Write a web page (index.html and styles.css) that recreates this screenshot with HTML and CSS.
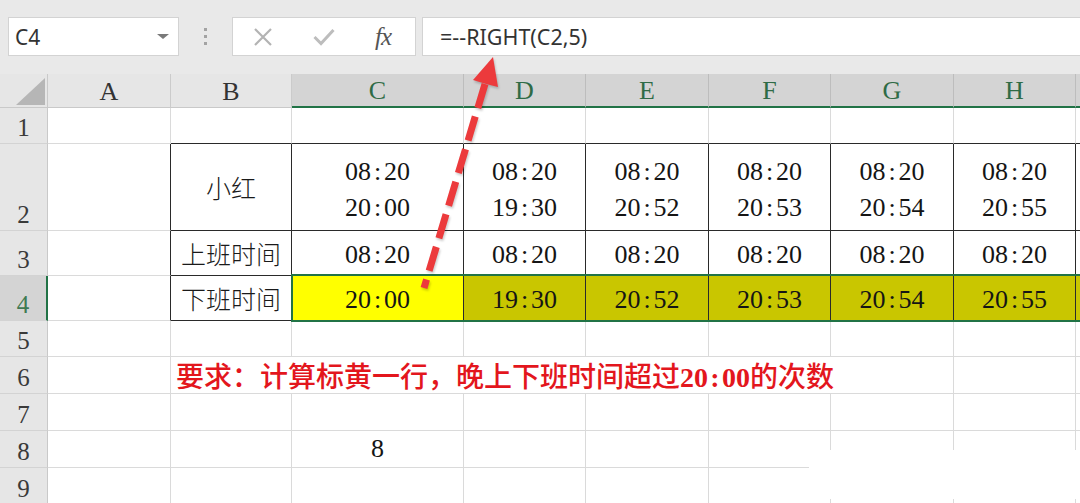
FILE: index.html
```html
<!DOCTYPE html>
<html lang="zh-CN">
<head>
<meta charset="utf-8">
<title>Excel</title>
<link rel="stylesheet" href="styles.css">
</head>
<body>
<div class="app">
  <div class="fbar">
    <div class="namebox"><span class="ref">C4</span><span class="caret"></span></div>
    <div class="grip"><i></i><i></i><i></i></div>
    <div class="fnbox">
      <svg class="ico-x" viewBox="0 0 20 20" width="20" height="20"><path d="M2 2 L18 18 M18 2 L2 18" stroke="#b3b3b3" stroke-width="2.2" fill="none"/></svg>
      <svg class="ico-ok" viewBox="0 0 22 18" width="22" height="18"><path d="M1.5 9 L8 15.5 L20.5 2" stroke="#bdbdbd" stroke-width="3" fill="none"/></svg>
      <span class="fx">fx</span>
    </div>
    <div class="formula">=--RIGHT(C2,5)</div>
  </div>

  <div class="sheet">
    <!-- header row -->
    <div class="corner"></div>
    <div class="ch">A</div>
    <div class="ch">B</div>
    <div class="ch s">C</div>
    <div class="ch s">D</div>
    <div class="ch s">E</div>
    <div class="ch s">F</div>
    <div class="ch s">G</div>
    <div class="ch s">H</div>
    <div class="ch s"></div>

    <!-- row 1 -->
    <div class="rh">1</div>
    <div class="c"></div>
    <div class="c bb"></div>
    <div class="c bb"></div>
    <div class="c bb"></div>
    <div class="c bb"></div>
    <div class="c bb"></div>
    <div class="c bb"></div>
    <div class="c bb"></div>
    <div class="c bb"></div>

    <!-- row 2 -->
    <div class="rh">2</div>
    <div class="c br"></div>
    <div class="c t cn">小红</div>
    <div class="c t tm two"><span class="v">08<span class="co">:</span>20<br>20<span class="co">:</span>00</span></div>
    <div class="c t tm two"><span class="v">08<span class="co">:</span>20<br>19<span class="co">:</span>30</span></div>
    <div class="c t tm two"><span class="v">08<span class="co">:</span>20<br>20<span class="co">:</span>52</span></div>
    <div class="c t tm two"><span class="v">08<span class="co">:</span>20<br>20<span class="co">:</span>53</span></div>
    <div class="c t tm two"><span class="v">08<span class="co">:</span>20<br>20<span class="co">:</span>54</span></div>
    <div class="c t tm two"><span class="v">08<span class="co">:</span>20<br>20<span class="co">:</span>55</span></div>
    <div class="c t"></div>

    <!-- row 3 -->
    <div class="rh">3</div>
    <div class="c br"></div>
    <div class="c t cn">上班时间</div>
    <div class="c t tm one"><span class="v">08<span class="co">:</span>20</span></div>
    <div class="c t tm one"><span class="v">08<span class="co">:</span>20</span></div>
    <div class="c t tm one"><span class="v">08<span class="co">:</span>20</span></div>
    <div class="c t tm one"><span class="v">08<span class="co">:</span>20</span></div>
    <div class="c t tm one"><span class="v">08<span class="co">:</span>20</span></div>
    <div class="c t tm one"><span class="v">08<span class="co">:</span>20</span></div>
    <div class="c t"></div>

    <!-- row 4 -->
    <div class="rh s">4</div>
    <div class="c br"></div>
    <div class="c t cn">下班时间</div>
    <div class="c t tm one yel"><span class="v">20<span class="co">:</span>00</span></div>
    <div class="c t tm one oli"><span class="v">19<span class="co">:</span>30</span></div>
    <div class="c t tm one oli"><span class="v">20<span class="co">:</span>52</span></div>
    <div class="c t tm one oli"><span class="v">20<span class="co">:</span>53</span></div>
    <div class="c t tm one oli"><span class="v">20<span class="co">:</span>54</span></div>
    <div class="c t tm one oli"><span class="v">20<span class="co">:</span>55</span></div>
    <div class="c t oli"></div>

    <!-- row 5 -->
    <div class="rh">5</div>
    <div class="c"></div><div class="c"></div><div class="c"></div><div class="c"></div>
    <div class="c"></div><div class="c"></div><div class="c"></div><div class="c"></div><div class="c"></div>

    <!-- row 6 -->
    <div class="rh">6</div>
    <div class="c"></div>
    <div class="c note"><span class="v">要求：计算标黄一行，晚上下班时间超过<span class="num">20<span class="co">:</span>00</span>的次数</span></div>
    <div class="c"></div>
    <div class="c"></div>

    <!-- row 7 -->
    <div class="rh">7</div>
    <div class="c"></div><div class="c"></div><div class="c"></div><div class="c"></div>
    <div class="c"></div><div class="c"></div><div class="c"></div><div class="c"></div><div class="c"></div>

    <!-- row 8 -->
    <div class="rh">8</div>
    <div class="c"></div><div class="c"></div>
    <div class="c tm"><span class="v">8</span></div>
    <div class="c"></div><div class="c"></div><div class="c"></div><div class="c"></div><div class="c"></div><div class="c"></div>

    <!-- row 9 -->
    <div class="rh">9</div>
    <div class="c"></div><div class="c"></div><div class="c"></div><div class="c"></div>
    <div class="c"></div><div class="c"></div><div class="c"></div><div class="c"></div><div class="c"></div>
  </div>

  <div class="sel"></div>
  <div class="patch"></div>

  <svg class="arrow" viewBox="0 0 1080 503" width="1080" height="503">
    <line x1="485" y1="84" x2="424" y2="288" stroke="#ec3a3c" stroke-width="7" stroke-dasharray="25 9"/>
    <polygon points="493,57 473,80 486,84 498,87" fill="#ec3a3c"/>
  </svg>
</div>
</body>
</html>
```

FILE: styles.css
```css
* { box-sizing: border-box; margin: 0; padding: 0; }

html, body {
  width: 1080px;
  height: 503px;
  overflow: hidden;
  background: #ffffff;
}

body {
  font-family: "Liberation Serif", "DejaVu Serif", serif;
}

.app {
  position: relative;
  width: 1080px;
  height: 503px;
  overflow: hidden;
  background: #ffffff;
}

/* ---------- formula bar ---------- */
.fbar {
  height: 74px;
  background: #e9e9e9;
  display: flex;
  align-items: flex-start;
  padding: 17px 0 0 8px;
}

.namebox {
  width: 171px;
  height: 39px;
  background: #ffffff;
  border: 1px solid #d3d3d3;
  display: flex;
  align-items: center;
  justify-content: space-between;
  padding: 0 9px 0 6px;
}

.ref {
  font-family: "Noto Sans", sans-serif;
  font-size: 21px;
  color: #333333;
}

.caret {
  width: 0;
  height: 0;
  border-left: 6px solid transparent;
  border-right: 6px solid transparent;
  border-top: 5px solid #7a7a7a;
}

.grip {
  width: 53px;
  height: 39px;
  display: flex;
  flex-direction: column;
  align-items: center;
  justify-content: center;
  gap: 4px;
}

.grip i {
  display: block;
  width: 3px;
  height: 3px;
  background: #a3a3a3;
}

.fnbox {
  width: 184px;
  height: 39px;
  background: #ffffff;
  border: 1px solid #d3d3d3;
  display: flex;
  align-items: center;
  padding-left: 20px;
}

.ico-ok { margin-left: 40px; }

.fx {
  margin-left: 40px;
  font-family: "Liberation Serif", serif;
  font-style: italic;
  font-size: 25px;
  color: #555555;
  letter-spacing: -1px;
}

.formula {
  flex: 1;
  margin-left: 6px;
  height: 39px;
  background: #ffffff;
  border: 1px solid #d3d3d3;
  border-right: 0;
  padding-left: 17px;
  display: flex;
  align-items: center;
  font-family: "Noto Sans", sans-serif;
  font-size: 21.5px;
  color: #333333;
}

/* ---------- sheet grid ---------- */
.sheet {
  display: grid;
  grid-template-columns: 48px 123px 121px 172px 122px 123px 122px 123px 122px 40px;
  grid-template-rows: 34px 36px 87px 45px 45px 36px 37px 37px 37px 37px;
}

.corner {
  background: #e6e6e6;
  border-right: 1px solid #c9c9c9;
  border-bottom: 1px solid #c9c9c9;
  position: relative;
}

.corner::after {
  content: "";
  position: absolute;
  left: 16px;
  top: 4px;
  width: 29px;
  height: 27px;
  background: #b6b6b6;
  clip-path: polygon(100% 0, 100% 100%, 0 100%);
}

.ch {
  background: #e6e6e6;
  border-right: 1px solid #cbcbcb;
  border-bottom: 1px solid #c9c9c9;
  display: flex;
  align-items: center;
  justify-content: center;
  font-size: 26px;
  color: #333333;
  padding-top: 2px;
}

.ch.s {
  background: #d4d4d4;
  color: #2f6b46;
  border-bottom: 2px solid #217346;
  border-right-color: #bdbdbd;
}

.rh {
  background: #e6e6e6;
  border-right: 1px solid #c9c9c9;
  border-bottom: 1px solid #d3d3d3;
  display: flex;
  align-items: flex-end;
  justify-content: center;
  font-size: 25px;
  line-height: 24px;
  color: #3a3a3a;
  padding-bottom: 3px;
}

.rh.s {
  background: #d4d4d4;
  color: #3f7a52;
  border-right: 2px solid #217346;
}

.c {
  border-right: 1px solid #dadada;
  border-bottom: 1px solid #dadada;
  display: flex;
  align-items: center;
  justify-content: center;
  font-size: 26px;
  color: #151515;
}

.v { display: block; }

.bb { border-bottom-color: #2a2a2a; }
.br { border-right-color: #2a2a2a; }
.t { border-right-color: #2a2a2a; border-bottom-color: #2a2a2a; }

.tm {
  font-family: "Liberation Serif", "DejaVu Serif", serif;
  font-size: 26px;
  line-height: 36px;
  text-align: center;
}

.one { padding-top: 3px; }
.two { padding-top: 6px; }

.co {
  display: inline-block;
  width: 0.5em;
  text-align: center;
}

.cn {
  font-family: "Noto Sans CJK SC", sans-serif;
  font-weight: 300;
  font-size: 25px;
  color: #1a1a1a;
}

.yel { background: #ffff00; }
.oli { background: #c9c600; }

.note {
  grid-column: span 6;
  justify-content: flex-start;
  padding-left: 5px;
  white-space: nowrap;
  font-family: "Noto Sans CJK SC", sans-serif;
  font-weight: 500;
  font-size: 28px;
  color: #e3161d;
}

.num {
  font-family: "Liberation Serif", serif;
  font-weight: 700;
}

/* ---------- overlays ---------- */
.sel {
  position: absolute;
  left: 291px;
  top: 274px;
  width: 820px;
  height: 48px;
  border: 2px solid #217346;
  pointer-events: none;
}

.patch {
  position: absolute;
  left: 809px;
  top: 450px;
  width: 271px;
  height: 49px;
  background: #ffffff;
}

.arrow {
  position: absolute;
  left: 0;
  top: 0;
  filter: drop-shadow(1px 2px 1px rgba(0, 0, 0, 0.2));
}
```
